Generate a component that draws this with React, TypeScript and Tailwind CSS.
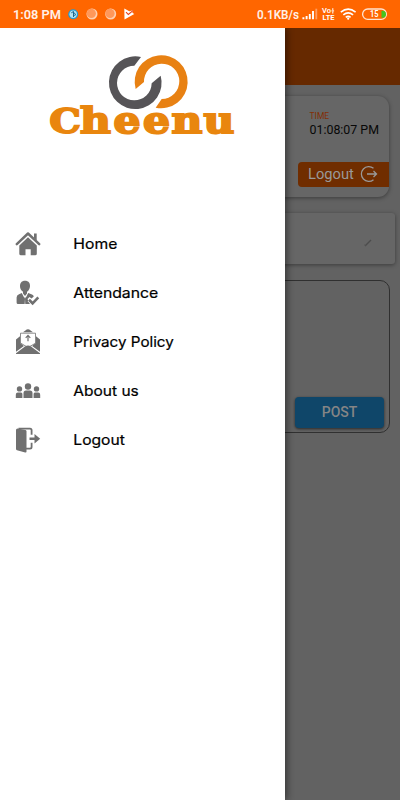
import type { ReactNode } from "react";

function StatusBar() {
  return (
    <header className="relative z-20 flex h-7 items-center justify-between bg-[#ff6600] pl-[13px] pr-3 font-['Roboto',sans-serif] text-white">
      <div className="flex items-center">
        <svg width="140" height="28" viewBox="0 0 140 28">
          <text x="0" y="19" fontSize="13" fontWeight="600" fill="#fff0e6" textLength="48" lengthAdjust="spacingAndGlyphs">1:08 PM</text>
          <circle cx="60.2" cy="14.2" r="5" fill="#219bd6" />
          <circle cx="60.2" cy="14.2" r="3.7" fill="#b5e2f2" />
          <path d="M58.300 12.800l2.200-1.300v5.500M60.500 12.500l2 1.500-1 2" stroke="#17678f" fill="none" />
          <circle cx="79" cy="14" r="5.5" fill="#ffd0b0" />
          <circle cx="78.3" cy="13.4" r="4.6" fill="#ff985a" />
          <circle cx="97.7" cy="14" r="5.5" fill="#ffd0b0" />
          <circle cx="97" cy="13.4" r="4.6" fill="#ff985a" />
          <path d="M111.3 8.500l5 2.700 4-1-1 2.600 2 1.200-9.800 5.500z" fill="#fff" />
          <path d="M113 12.2l2.300 2.200 5-4" stroke="#e8431c" strokeWidth="1.1" fill="none" />
        </svg>
      </div>
      <svg width="132" height="28" viewBox="256 0 132 28">
        <text x="257" y="19" fontSize="12" fontWeight="600" fill="#fff0e6" textLength="42" lengthAdjust="spacingAndGlyphs">0.1KB/s</text>
        <path d="M303.4 19.3v-2M306.6 19.3v-3.2M309.8 19.3v-5.3M313 19.3V11" stroke="#fff" strokeWidth="1.9" />
        <path d="M316.3 19.3V8.7" stroke="#ff9d61" strokeWidth="1.8" />
        <text x="322" y="13.2" fontSize="6.500" fontWeight="600" fill="#fff" textLength="9" lengthAdjust="spacingAndGlyphs">Vo</text>
        <path d="M332.800 8.200v2.200M332.800 11.400v2.200M331.500 10.900h2.600" stroke="#fff" strokeWidth="1" />
        <text x="322.5" y="19.800" fontSize="6.500" fontWeight="700" fill="#fff" textLength="12" lengthAdjust="spacingAndGlyphs">LTE</text>
        <g fill="none" stroke="#fff" strokeWidth="1.6">
          <path d="M340.8 12.2q7.4-6 14.8 0M343.3 14.9q4.9-4 9.8 0M345.8 17.3q2.4-2 4.8 0" />
        </g>
        <circle cx="348.2" cy="18.7" r="1.1" fill="#fff" />
        <rect x="362.6" y="9" width="23.8" height="10.4" rx="5.2" fill="none" stroke="#ffe4d1" strokeWidth="1.3" />
        <path d="M381.5 10.7h1a3.4 3.4 0 0 1 0 7h-1z" fill="#43c51f" />
        <text x="370" y="17.3" fontSize="8.5" fontWeight="600" fill="#fff" textLength="8.500" lengthAdjust="spacingAndGlyphs">15</text>
      </svg>
    </header>
  );
}

function Brand() {
  return (
    <svg className="ml-10 mt-[17px] block" width="210" height="100" viewBox="0 0 630 300">
      <path d="M303 36A79 79 0 1 0 362 92L335 115A52 52 0 1 1 283 62Z" fill="#565457" />
      <path d="M287 132A79.5 79.5 0 1 1 347 188L365 162A53 53 0 1 0 312 111Z" fill="#e88113" />
      <text x="24 100 183.5 257.5 329 409" y="264" transform="scale(1.2 1)" fontFamily="'DejaVu Serif', serif" fontWeight="700" fontSize="106" fill="#e9860e" stroke="#e9860e" strokeWidth="6"><tspan fontSize="98">C</tspan>heenu</text>
    </svg>
  );
}

function MenuIcon({ children }: { children: ReactNode }) {
  return (
    <svg width="26" height="26" viewBox="0 0 26 26" fill="#707070" className="shrink-0">
      {children}
    </svg>
  );
}

const HomeIcon = (
  <MenuIcon>
    <path d="M1.8 13.1L13 2.5 24.2 13.1" fill="none" stroke="#707070" strokeWidth="2.5" strokeLinecap="round" strokeLinejoin="round" />
    <path d="M19 2.5h2.7v7L19 7z" />
    <path d="M13 6.3l8.8 8.2v8.2q0 1.6-1.6 1.6h-4.5v-6.1h-5.2v6.1H6q-1.7 0-1.7-1.6v-8.2z" />
  </MenuIcon>
);

const AttendanceIcon = (
  <MenuIcon>
    <path d="M10 .8c3.4 0 5.2 2.2 5 5.4-.1 2.4-1.5 4.6-3 5.6v1.600L10 16l-2-2.600v-1.600C6.300 10.700 5 8.400 5 6.200 5 3 6.700.8 10 .8z" />
    <path d="M6.800 13l2.500 5v6H3q-1.400 0-1.400-1.500v-5q0-2.500 2.400-3.300zM13.200 13l3.800 1.500q1.400.6 1.800 2l-2.300 2-2-1.400-2 2 2.500 4.900h-4.300v-6z" />
    <path d="M10 17l1 1.500-.4 5.500H9.500L9 18.500z" />
    <path d="M14 19.800l3.600 3.500 5.700-6" fill="none" stroke="white" strokeWidth="4" />
    <path d="M14 19.800l3.600 3.500 5.700-6" fill="none" stroke="#707070" strokeWidth="2.600" />
  </MenuIcon>
);

const MailIcon = (
  <MenuIcon>
    <path d="M10.400 1.600q2.600-2.500 5.200 0L18 3.200H8z" />
    <path d="M5.500 4.200h15v10L13 18.500 5.500 14z" fill="white" stroke="#707070" strokeWidth=".8" />
    <path d="M1 10.500l4-3.200v6.500l3.900 3.100L1 22.700zM25 10.500l-4-3.200v6.500l-3.900 3.100 7.900 5.800z" />
    <path d="M1 24.200l9-6.700q3-2.200 6 0l9 6.700v.8H1z" />
    <path d="M13 12.300V6.500m-2.300 2.300L13 6.400l2.300 2.400" fill="none" stroke="#707070" strokeWidth="1.200" />
  </MenuIcon>
);

const PeopleIcon = (
  <MenuIcon>
    <circle cx="13" cy="8.500" r="3.200" />
    <circle cx="4.500" cy="10.900" r="2.700" />
    <circle cx="21.500" cy="10.900" r="2.700" />
    <path d="M8.500 20v-5q0-2.500 2.500-2.500h4q2.500 0 2.500 2.500V20zM.8 20v-3.300q0-2.200 2-2.200H6q1.400 0 1.400 1.500V20zM18.600 20v-4q0-1.500 1.300-1.500h3.300q2 0 2 2.200V20z" />
  </MenuIcon>
);

const DoorIcon = (
  <MenuIcon>
    <path d="M2.500 1.500l8 1.600q1 .3 1 1.400v20q0 1.300-1.300 1L2 23.200q-1-.3-1-1.300V3q0-1.500 1.500-1.500z" />
    <path d="M3.500 1.700H15q1.600 0 1.600 1.600v4.400M11 21.700h4q1.600 0 1.600-1.600v-4.300" fill="none" stroke="#707070" strokeWidth="1.800" />
    <path d="M14.500 10.600h5V7L25.200 11.800l-5.700 4.700V13h-5z" />
  </MenuIcon>
);

const entries = [
  { name: "Home", width: 44, icon: HomeIcon },
  { name: "Attendance", width: 85, icon: AttendanceIcon },
  { name: "Privacy Policy", width: 100.5, icon: MailIcon },
  { name: "About us", width: 65.5, icon: PeopleIcon },
  { name: "Logout", width: 51.5, icon: DoorIcon },
];

function Drawer() {
  return (
    <aside className="absolute left-0 top-7 z-10 h-[772px] w-[285px] bg-white shadow-[2px_0_7px_rgba(0,0,0,0.45)]">
      <Brand />
      <nav className="mt-[74px]">
        {entries.map((entry) => (
          <a key={entry.name} className="flex h-[49px] items-center pl-[15.4px]">
            {entry.icon}
            <svg className="ml-[31.6px]" width="110" height="26" viewBox="0 0 110 26">
              <text x="0.3" y="18" fontFamily="Inter, sans-serif" fontSize="14" fontWeight="400" fill="#000" stroke="#000" strokeWidth="0.2" textLength={entry.width} lengthAdjust="spacingAndGlyphs">{entry.name}</text>
            </svg>
          </a>
        ))}
      </nav>
    </aside>
  );
}

function Dashboard() {
  return (
    <main className="font-['Roboto',sans-serif]">
      <div className="h-[57px] bg-[#662900]" />
      <section className="ml-3 mr-[11px] mt-[11px] flex h-[101px] flex-col items-end rounded-[11px] bg-[#666] shadow-[0_1px_4px_rgba(0,0,0,0.4)]">
        <div className="mr-[9.500px] mt-[15px] w-[70px]">
          <div className="text-[8.500px] leading-[11px] text-[#822f05]">TIME</div>
          <div className="whitespace-nowrap text-[12.400px] leading-4 text-[#080808]">01:08:07 PM</div>
        </div>
        <button className="mt-[23.500px] flex h-[25.500px] w-[91.500px] items-center justify-between rounded-l-[4px] bg-[#702d00] pl-[10.500px] pr-[11px] text-[14.700px] text-[#999]">
          <span>Logout</span>
          <svg width="18" height="18" viewBox="0 0 18 18" fill="none" stroke="#999" strokeWidth="1.300">
            <path d="M13.500 3.300A7.400 7.400 0 1 0 13.500 14.700M7 9h9.500M13.500 6l3 3-3 3" />
          </svg>
        </button>
      </section>
      <section className="ml-1 mr-[5px] mt-4 flex h-[51px] items-center justify-end rounded-[3px] bg-[#666] pr-[23px] shadow-[0_1px_4px_rgba(0,0,0,0.4)]">
        <svg width="8" height="8" viewBox="0 0 8 8" className="mt-2">
          <path d="M1 7l6-6" stroke="#4c4c4c" strokeWidth="1.400" />
          <path d="M0 5l1 2" stroke="#5c5c5c" />
        </svg>
      </section>
      <section className="ml-3 mr-[10px] mt-4 flex h-[153px] items-end justify-end rounded-[10px] border border-[#303030] pb-1 pr-[5px]">
        <button className="h-[31px] w-[89px] rounded-[4px] bg-[#0f4669] text-[14px] font-medium text-[#858585] shadow-[0_1px_3px_rgba(0,0,0,0.6)]">POST</button>
      </section>
    </main>
  );
}

export default function App() {
  return (
    <div className="relative h-[800px] w-[400px] overflow-hidden bg-[#626262]">
      <StatusBar />
      <Dashboard />
      <Drawer />
    </div>
  );
}
